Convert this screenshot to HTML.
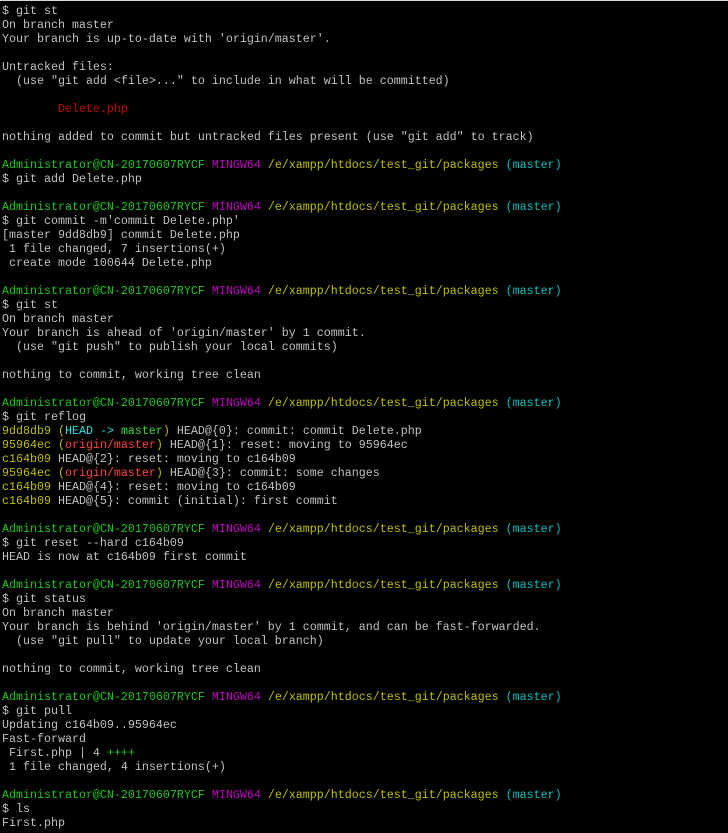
<!DOCTYPE html><html><head><meta charset="utf-8"><style>
html,body{margin:0;padding:0;background:#000;width:728px;height:833px;overflow:hidden}
body{border-top:1px solid #d8d8d8;box-sizing:border-box}
pre{margin:0;padding:3px 0 0 2px;font-family:"Liberation Mono",monospace;font-size:11.67px;line-height:14px;color:#c0c0c0;white-space:pre}
.g{color:#1cc81c}.m{color:#c000c0}.y{color:#bfbf00}.c{color:#00bfbf}.r{color:#c00000}
.br{color:#ff4040}.bc{color:#20e0e0}.bg{color:#30e030}
</style></head><body><pre>$ git st
On branch master
Your branch is up-to-date with 'origin/master'.

Untracked files:
  (use "git add &lt;file&gt;..." to include in what will be committed)

        <span class="r">Delete.php</span>

nothing added to commit but untracked files present (use "git add" to track)

<span class="g">Administrator@CN-20170607RYCF</span> <span class="m">MINGW64</span> <span class="y">/e/xampp/htdocs/test_git/packages</span> <span class="c">(master)</span>
$ git add Delete.php

<span class="g">Administrator@CN-20170607RYCF</span> <span class="m">MINGW64</span> <span class="y">/e/xampp/htdocs/test_git/packages</span> <span class="c">(master)</span>
$ git commit -m'commit Delete.php'
[master 9dd8db9] commit Delete.php
 1 file changed, 7 insertions(+)
 create mode 100644 Delete.php

<span class="g">Administrator@CN-20170607RYCF</span> <span class="m">MINGW64</span> <span class="y">/e/xampp/htdocs/test_git/packages</span> <span class="c">(master)</span>
$ git st
On branch master
Your branch is ahead of 'origin/master' by 1 commit.
  (use "git push" to publish your local commits)

nothing to commit, working tree clean

<span class="g">Administrator@CN-20170607RYCF</span> <span class="m">MINGW64</span> <span class="y">/e/xampp/htdocs/test_git/packages</span> <span class="c">(master)</span>
$ git reflog
<span class="y">9dd8db9 (</span><span class="bc">HEAD -&gt; </span><span class="bg">master</span><span class="y">)</span> HEAD@{0}: commit: commit Delete.php
<span class="y">95964ec (</span><span class="br">origin/master</span><span class="y">)</span> HEAD@{1}: reset: moving to 95964ec
<span class="y">c164b09</span> HEAD@{2}: reset: moving to c164b09
<span class="y">95964ec (</span><span class="br">origin/master</span><span class="y">)</span> HEAD@{3}: commit: some changes
<span class="y">c164b09</span> HEAD@{4}: reset: moving to c164b09
<span class="y">c164b09</span> HEAD@{5}: commit (initial): first commit

<span class="g">Administrator@CN-20170607RYCF</span> <span class="m">MINGW64</span> <span class="y">/e/xampp/htdocs/test_git/packages</span> <span class="c">(master)</span>
$ git reset --hard c164b09
HEAD is now at c164b09 first commit

<span class="g">Administrator@CN-20170607RYCF</span> <span class="m">MINGW64</span> <span class="y">/e/xampp/htdocs/test_git/packages</span> <span class="c">(master)</span>
$ git status
On branch master
Your branch is behind 'origin/master' by 1 commit, and can be fast-forwarded.
  (use "git pull" to update your local branch)

nothing to commit, working tree clean

<span class="g">Administrator@CN-20170607RYCF</span> <span class="m">MINGW64</span> <span class="y">/e/xampp/htdocs/test_git/packages</span> <span class="c">(master)</span>
$ git pull
Updating c164b09..95964ec
Fast-forward
 First.php | 4 <span class="g">++++</span>
 1 file changed, 4 insertions(+)

<span class="g">Administrator@CN-20170607RYCF</span> <span class="m">MINGW64</span> <span class="y">/e/xampp/htdocs/test_git/packages</span> <span class="c">(master)</span>
$ ls
First.php
</pre></body></html>
